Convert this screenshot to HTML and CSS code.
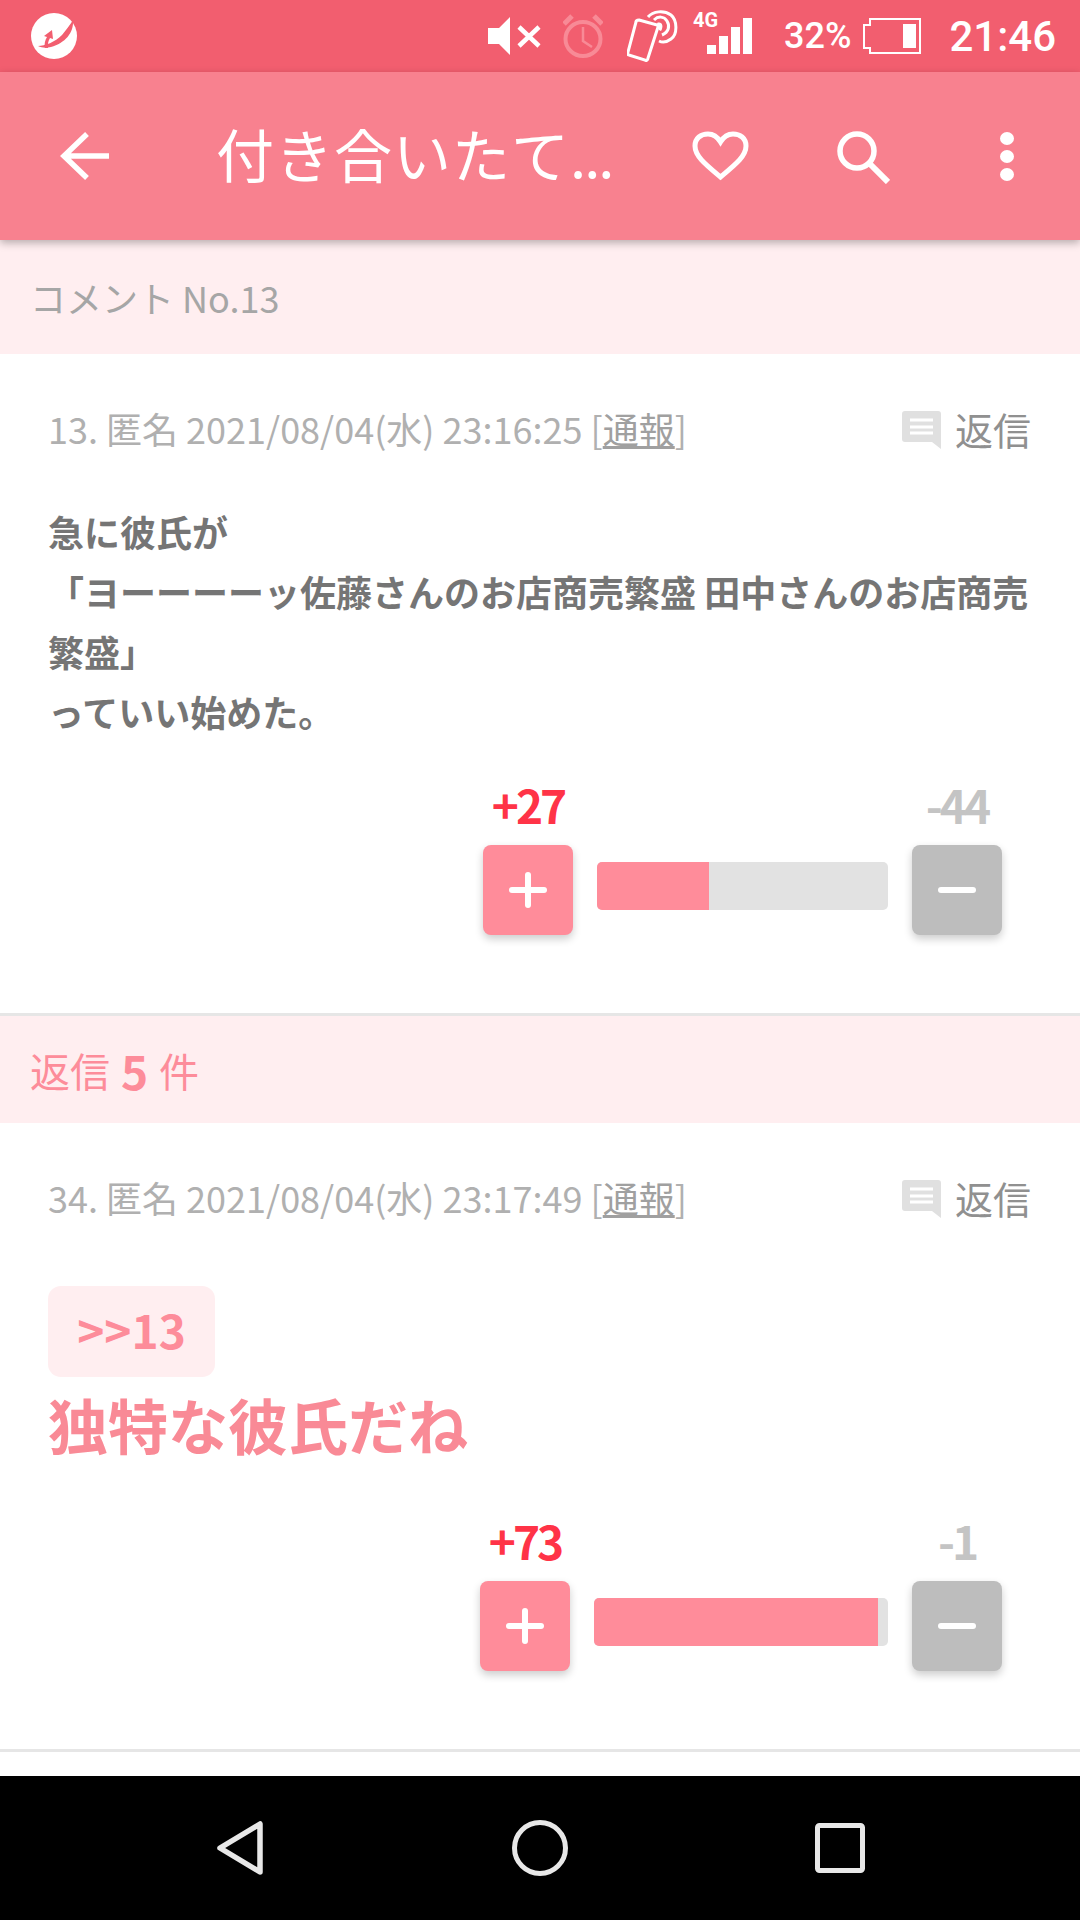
FILE: index.html
```html
<!DOCTYPE html>
<html lang="ja">

<head>
    <meta charset="UTF-8">
    <meta name="viewport" content="width=device-width, initial-scale=1.0">
    <title>コメント No.13</title>
    <link rel="stylesheet" href="styles.css">
</head>

<body>
    <div class="phone">
        <div class="statusbar">
            <svg class="logo" width="46" height="46" viewBox="0 0 46 46">
                <circle cx="23" cy="23" r="23" fill="#fff" />
                <path d="M42 7C43 20 34 30 20 34C15 35 11 35 7 33C14 33 24 29 31 22C35 17 39 12 42 7Z" fill="#f25e6f" />
                <path d="M14 35C13 31 14 27 16 24L13 23L21 17L22 26L19 25C17 28 16.500 32 17 35Z" fill="#f25e6f" />
            </svg>
            <div class="status-right">
                <svg class="mute" width="53" height="38" viewBox="0 0 53 38">
                    <path d="M0 11H11L22 0V38L11 27H0Z" fill="#fff" />
                    <path d="M31 10L51 29M51 10L31 29" stroke="#fff" stroke-width="4.5" fill="none" />
                </svg>
                <svg class="alarm" width="40" height="44" viewBox="0 0 40 44">
                    <ellipse cx="20" cy="25" rx="17.5" ry="17" fill="none" stroke="#f88a96" stroke-width="4" />
                    <path d="M20 13V27L29 33" fill="none" stroke="#f88a96" stroke-width="2.5" />
                    <path d="M1 10L9 2M39 10L31 2" fill="none" stroke="#f88a96" stroke-width="5" />
                </svg>
                <svg class="nfc" width="51" height="52" viewBox="0 0 51 52">
                    <path d="M12 10L30 15C31 15 32 16 31 17L21 48C21 50 19 51 18 50L2 45C1 45 0 44 1 42L9 12C9 10 11 10 12 10Z" fill="#f25e6f" stroke="#fff" stroke-width="3" />
                    <path d="M21 7C26 1 37 0 44 5C50 10 51 24 44 29C40 32 36 33 32 31" fill="none" stroke="#fff" stroke-width="3" />
                    <path d="M27 10C31 6 37 6 40 11C43 16 42 22 35 25" fill="none" stroke="#fff" stroke-width="3" />
                    <path d="M30 13C35 11 37 16 34 21L32 20Z" fill="#fff" />
                </svg>
                <div class="signal">
                    <span class="signal-tag">4G</span>
                    <svg width="45" height="36" viewBox="0 0 45 36">
                        <path d="M0 27H9V36H0ZM12 18H21V36H12ZM24 9H33V36H24ZM36 0H45V36H36Z" fill="#fff" />
                    </svg>
                </div>
                <span class="battery-pct">32%</span>
                <svg class="battery" width="58" height="36" viewBox="0 0 58 36">
                    <path d="M7 1H57V35H7V30H1V7H7Z" fill="none" stroke="#fff" stroke-width="2" />
                    <rect x="40" y="6" width="13" height="24" fill="#fff" />
                </svg>
                <span class="clock">21:46</span>
            </div>
        </div>

        <div class="toolbar">
            <svg class="tool-back" width="49" height="48" viewBox="0 0 49 48">
                <path d="M49 24H5M27 2L4 24L27 46" fill="none" stroke="#fff" stroke-width="5.5" />
            </svg>
            <div class="tool-title">付き合いたて<span class="tool-ellipsis">...</span></div>
            <svg class="tool-heart" width="57" height="50" viewBox="0 0 57 50">
                <path d="M28.500 46C13 33 3 25 3 15C3 7 9 3 16 3C21 3 25.500 6 28.500 11C31.500 6 36 3 41 3C48 3 54 7 54 15C54 25 44 33 28.500 46Z" fill="none" stroke="#fff" stroke-width="5" />
            </svg>
            <svg class="tool-search" width="53" height="53" viewBox="0 0 53 53">
                <circle cx="20" cy="20" r="17" fill="none" stroke="#fff" stroke-width="5.5" />
                <path d="M32 32L51 51" fill="none" stroke="#fff" stroke-width="6" />
            </svg>
            <div class="tool-dots"><i></i><i></i><i></i></div>
        </div>

        <div class="content">
            <div class="section-head section-head-top">コメント No.13</div>

            <div class="comment comment-main">
                <div class="comment-meta">
                    <div class="meta-text">13. 匿名 2021/08/04(水) 23:16:25 [<u>通報</u>]</div>
                    <div class="reply-link">
                        <svg width="39" height="38" viewBox="0 0 39 38">
                            <path d="M3 0H36C38 0 39 1 39 3V38L30 31H3C1 31 0 30 0 28V3C0 1 1 0 3 0Z" fill="#e0e0e0" />
                            <path d="M8 9H31M8 16H31M8 22H31" stroke="#fff" stroke-width="3" />
                        </svg>
                        <span>返信</span>
                    </div>
                </div>
                <div class="comment-body">急に彼氏が<br>「ヨーーーーッ佐藤さんのお店商売繁盛 田中さんのお店商売繁盛」<br>っていい始めた。</div>
                <div class="vote">
                    <div class="vote-plus">
                        <span class="count-plus">+27</span>
                        <div class="btn btn-plus"><i class="bar-h"></i><i class="bar-v"></i></div>
                    </div>
                    <div class="vote-track track-27"><div class="vote-fill" style="width: 38.5%"></div></div>
                    <div class="vote-minus">
                        <span class="count-minus">-44</span>
                        <div class="btn btn-minus"><i class="bar-h"></i></div>
                    </div>
                </div>
            </div>

            <div class="section-head section-head-reply">返信 <b>5</b> 件</div>

            <div class="comment comment-reply">
                <div class="comment-meta">
                    <div class="meta-text">34. 匿名 2021/08/04(水) 23:17:49 [<u>通報</u>]</div>
                    <div class="reply-link">
                        <svg width="39" height="38" viewBox="0 0 39 38">
                            <path d="M3 0H36C38 0 39 1 39 3V38L30 31H3C1 31 0 30 0 28V3C0 1 1 0 3 0Z" fill="#e0e0e0" />
                            <path d="M8 9H31M8 16H31M8 22H31" stroke="#fff" stroke-width="3" />
                        </svg>
                        <span>返信</span>
                    </div>
                </div>
                <div class="anchor">&gt;&gt;13</div>
                <div class="comment-big">独特な彼氏だね</div>
                <div class="vote">
                    <div class="vote-plus">
                        <span class="count-plus">+73</span>
                        <div class="btn btn-plus"><i class="bar-h"></i><i class="bar-v"></i></div>
                    </div>
                    <div class="vote-track track-73"><div class="vote-fill" style="width: 96.6%"></div></div>
                    <div class="vote-minus">
                        <span class="count-minus">-1</span>
                        <div class="btn btn-minus"><i class="bar-h"></i></div>
                    </div>
                </div>
            </div>
        </div>

        <div class="navbar">
            <svg width="50" height="58" viewBox="0 0 50 58">
                <path d="M45 5V53L5 29Z" fill="none" stroke="#e8e8e8" stroke-width="5.5" stroke-linejoin="round" />
            </svg>
            <svg width="56" height="56" viewBox="0 0 56 56">
                <circle cx="28" cy="28" r="25.500" fill="none" stroke="#e8e8e8" stroke-width="5" />
            </svg>
            <svg width="50" height="50" viewBox="0 0 50 50">
                <rect x="2.500" y="2.500" width="45" height="45" rx="2" fill="none" stroke="#e8e8e8" stroke-width="5" />
            </svg>
        </div>
    </div>
</body>

</html>
```

FILE: styles.css
```css
* {
    box-sizing: border-box;
    padding: 0;
    margin: 0;
}

body {
    background-color: #fff;
    font-family: "Noto Sans CJK JP", "Noto Sans", sans-serif;
}

.phone {
    width: 1080px;
    height: 1920px;
    display: flex;
    flex-direction: column;
    overflow: hidden;
}

.statusbar {
    height: 72px;
    flex: none;
    background: #f25e6f;
    display: flex;
    align-items: center;
    justify-content: space-between;
    padding: 0 24px 0 31px;
    color: #fff;
}

.status-right {
    display: flex;
    align-items: center;
}

.mute {
    margin-right: 22px;
}

.alarm {
    margin-right: 24px;
}

.nfc {
    margin-right: 16px;
}

.signal {
    position: relative;
    width: 58px;
    height: 36px;
    display: flex;
    justify-content: flex-end;
    margin-right: 32px;
}

.signal-tag {
    position: absolute;
    left: -1px;
    top: -10px;
    font-size: 20px;
    line-height: 24px;
    font-weight: 700;
    font-family: Roboto, sans-serif;
}

.battery-pct {
    font-family: Roboto, sans-serif;
    font-size: 36px;
    font-weight: 500;
    margin-right: 12px;
}

.battery {
    margin-right: 28px;
}

.clock {
    font-family: Roboto, sans-serif;
    font-size: 42px;
    font-weight: 500;
}

.toolbar {
    height: 168px;
    flex: none;
    background: #f8818f;
    display: flex;
    align-items: center;
    color: #fff;
    padding-left: 60px;
    position: relative;
    box-shadow: 0 3px 8px rgba(0, 0, 0, 0.28);
}

.tool-back {
    margin-right: 107px;
}

.tool-title {
    width: 476px;
    font-size: 58px;
    font-weight: 400;
    letter-spacing: 1px;
    white-space: nowrap;
    margin-top: -6px;
}

.tool-ellipsis {
    letter-spacing: -2px;
}

.tool-heart {
    margin-right: 88px;
}

.tool-search {
    margin-right: 110px;
    margin-top: 2px;
}

.tool-dots {
    display: flex;
    flex-direction: column;
    gap: 5px;
}

.tool-dots i {
    display: block;
    width: 14px;
    height: 13px;
    border-radius: 50%;
    background: #fff;
}

.content {
    flex: 1;
    display: flex;
    flex-direction: column;
}

.section-head {
    background: #ffeef0;
    padding-left: 30px;
    display: flex;
    align-items: center;
    flex: none;
}

.section-head-top {
    height: 114px;
    font-size: 36px;
    color: #a6a6a6;
}

.section-head-reply {
    height: 107px;
    font-size: 40px;
    color: #fd8c9a;
    white-space: pre;
}

.section-head-reply b {
    font-size: 46px;
    margin: 0 2px;
}

.comment {
    flex: none;
    padding: 50px 49px 0 48px;
    border-bottom: 3px solid #e6e6e6;
}

.comment-main {
    height: 662px;
}

.comment-reply {
    height: 629px;
}

.comment-meta {
    display: flex;
    justify-content: space-between;
    align-items: center;
    height: 48px;
}

.meta-text {
    font-size: 36px;
    color: #b0b0b0;
    white-space: nowrap;
}

.meta-text u {
    color: #a0a0a0;
}

.reply-link {
    display: flex;
    align-items: center;
    gap: 14px;
    font-size: 38px;
    color: #909090;
}

.reply-link svg {
    margin-top: 3px;
}

.comment-body {
    margin-top: 49px;
    margin-bottom: 38px;
    font-size: 36px;
    font-weight: 700;
    color: #757575;
    line-height: 60px;
}

.anchor {
    margin-top: 65px;
    width: 167px;
    height: 91px;
    padding-bottom: 6px;
    background: #ffeef0;
    border-radius: 13px;
    color: #fd8c9a;
    font-size: 46px;
    font-weight: 700;
    display: flex;
    align-items: center;
    justify-content: center;
}

.comment-big {
    margin-top: 2px;
    margin-bottom: 46px;
    font-size: 60px;
    font-weight: 700;
    color: #f98a96;
    line-height: 90px;
}

.vote {
    margin-right: 29px;
    display: flex;
    justify-content: flex-end;
    align-items: flex-start;
}

.vote-plus,
.vote-minus {
    width: 90px;
    display: flex;
    flex-direction: column;
    align-items: center;
}

.count-plus,
.count-minus {
    font-size: 46px;
    font-weight: 700;
    line-height: 50px;
    margin-bottom: 16px;
    letter-spacing: -3px;
}

.count-plus {
    color: #ff3347;
}

.count-minus {
    color: #c4c4c4;
}

.btn {
    position: relative;
    width: 90px;
    height: 90px;
    border-radius: 8px;
    box-shadow: 0 4px 8px rgba(0, 0, 0, 0.2);
}

.btn-plus {
    background: #ff8c9a;
}

.btn-minus {
    background: #bdbdbd;
}

.bar-h,
.bar-v {
    position: absolute;
    background: #fff;
    border-radius: 3px;
}

.bar-h {
    left: 26px;
    top: 42px;
    width: 38px;
    height: 6px;
}

.bar-v {
    left: 42px;
    top: 27px;
    width: 6px;
    height: 36px;
}

.vote-track {
    margin: 83px 24px 0;
    height: 48px;
    background: #e2e2e2;
    border-radius: 5px;
    overflow: hidden;
}

.track-27 {
    width: 291px;
}

.track-73 {
    width: 294px;
}

.vote-fill {
    height: 100%;
    background: #ff8c9a;
}

.navbar {
    height: 144px;
    flex: none;
    background: #000;
    display: flex;
    align-items: center;
    padding: 0 215px;
    justify-content: space-between;
}
```
